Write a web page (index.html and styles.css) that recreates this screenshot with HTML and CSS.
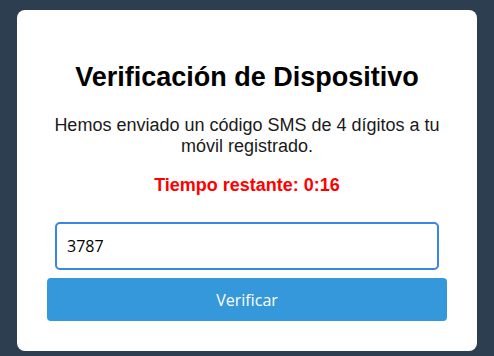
FILE: index.html
```html
<!DOCTYPE html>
<html lang="es">
<head>
<meta charset="utf-8">
<title>Verificación de Dispositivo</title>
<link rel="stylesheet" href="styles.css">
</head>
<body>
  <main class="card">
    <h1 class="title">Verificación de Dispositivo</h1>
    <p class="message">Hemos enviado un código SMS de 4 dígitos a tu móvil registrado.</p>
    <p class="timer">Tiempo restante: 0:16</p>
    <input class="code-input" type="text" value="3787">
    <button class="verify-btn" type="button">Verificar</button>
  </main>
</body>
</html>
```

FILE: styles.css
```css
html, body {
  margin: 0;
  padding: 0;
}
body {
  background: #2c3e50;
  height: 356px;
  display: flex;
  justify-content: center;
  align-items: flex-start;
  font-family: "Liberation Sans", Arial, sans-serif;
}
.card {
  margin-top: 10px;
  width: 460px;
  box-sizing: border-box;
  background: #ffffff;
  border-radius: 8px;
  padding: 30px;
  display: flex;
  flex-direction: column;
  text-align: center;
}
.title {
  font-size: 27px;
  font-weight: bold;
  color: #000;
  margin: 22px 0 22px;
}
.message {
  font-size: 18px;
  color: #1a1a1a;
  margin: 0 0 18px;
}
.timer {
  font-size: 18px;
  font-weight: bold;
  color: #ff0000;
  margin: 0 0 26px;
}
.code-input {
  margin: 0 8px 8px;
  height: 48px;
  box-sizing: border-box;
  border: 1px solid #c8c8c8;
  outline: 2px solid #3b86e4;
  outline-offset: -2px;
  border-radius: 5px;
  padding: 0 11px;
  font-family: "Open Sans", "Noto Sans", sans-serif;
  font-size: 16px;
  color: #000;
  background: #fff;
}
.verify-btn {
  height: 43px;
  border: none;
  border-radius: 4px;
  background: #3498db;
  color: #ffffff;
  font-family: "Open Sans", "Noto Sans", sans-serif;
  font-size: 16px;
  padding: 0;
}
```
